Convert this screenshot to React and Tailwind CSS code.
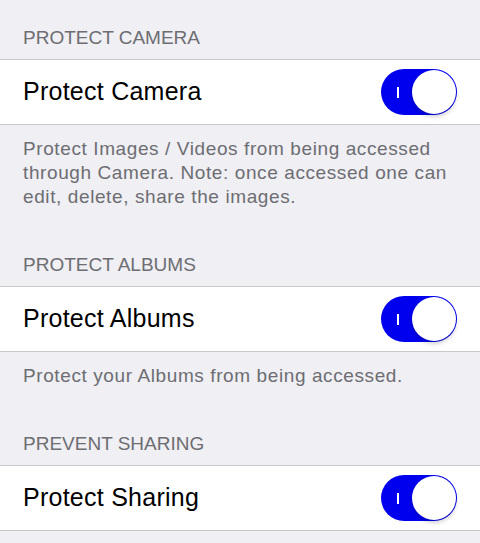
import React from 'react';

const font = { fontFamily: '"Liberation Sans", Arial, sans-serif' };

function Toggle() {
  return (
    <div className="relative flex h-[46px] w-[76px] shrink-0 items-center justify-end rounded-full bg-[#0000ee] p-px">
      <span className="absolute left-[16px] top-[18px] h-[11px] w-[2px] bg-white" />
      <span className="h-[44px] w-[44px] rounded-full bg-white shadow-[0_3px_4px_rgba(0,0,0,0.18)]" />
    </div>
  );
}

function Section({ header, title, note }) {
  return (
    <div>
      <div className="px-[23px] pt-[26px] pb-[9px] text-[19px] leading-[24px] text-[#6d6d72]">{header}</div>
      <div className="flex h-[66px] items-center justify-between border-y border-[#c8c7cc] bg-white pl-[23px] pr-[23px]">
        <span className="text-[25px] tracking-[0.25px] text-black">{title}</span>
        <Toggle />
      </div>
      {note && (
        <div className="px-[23px] pt-3 pb-[18px] text-[19px] leading-[24px] tracking-[0.6px] text-[#6d6d72]">{note}</div>
      )}
    </div>
  );
}

export default function App() {
  return (
    <div className="min-h-[543px] w-[480px] bg-[#efeff4]" style={font}>
      <Section
        header="PROTECT CAMERA"
        title="Protect Camera"
        note="Protect Images / Videos from being accessed through Camera. Note: once accessed one can edit, delete, share the images."
      />
      <Section
        header="PROTECT ALBUMS"
        title="Protect Albums"
        note="Protect your Albums from being accessed."
      />
      <Section header="PREVENT SHARING" title="Protect Sharing" />
    </div>
  );
}
